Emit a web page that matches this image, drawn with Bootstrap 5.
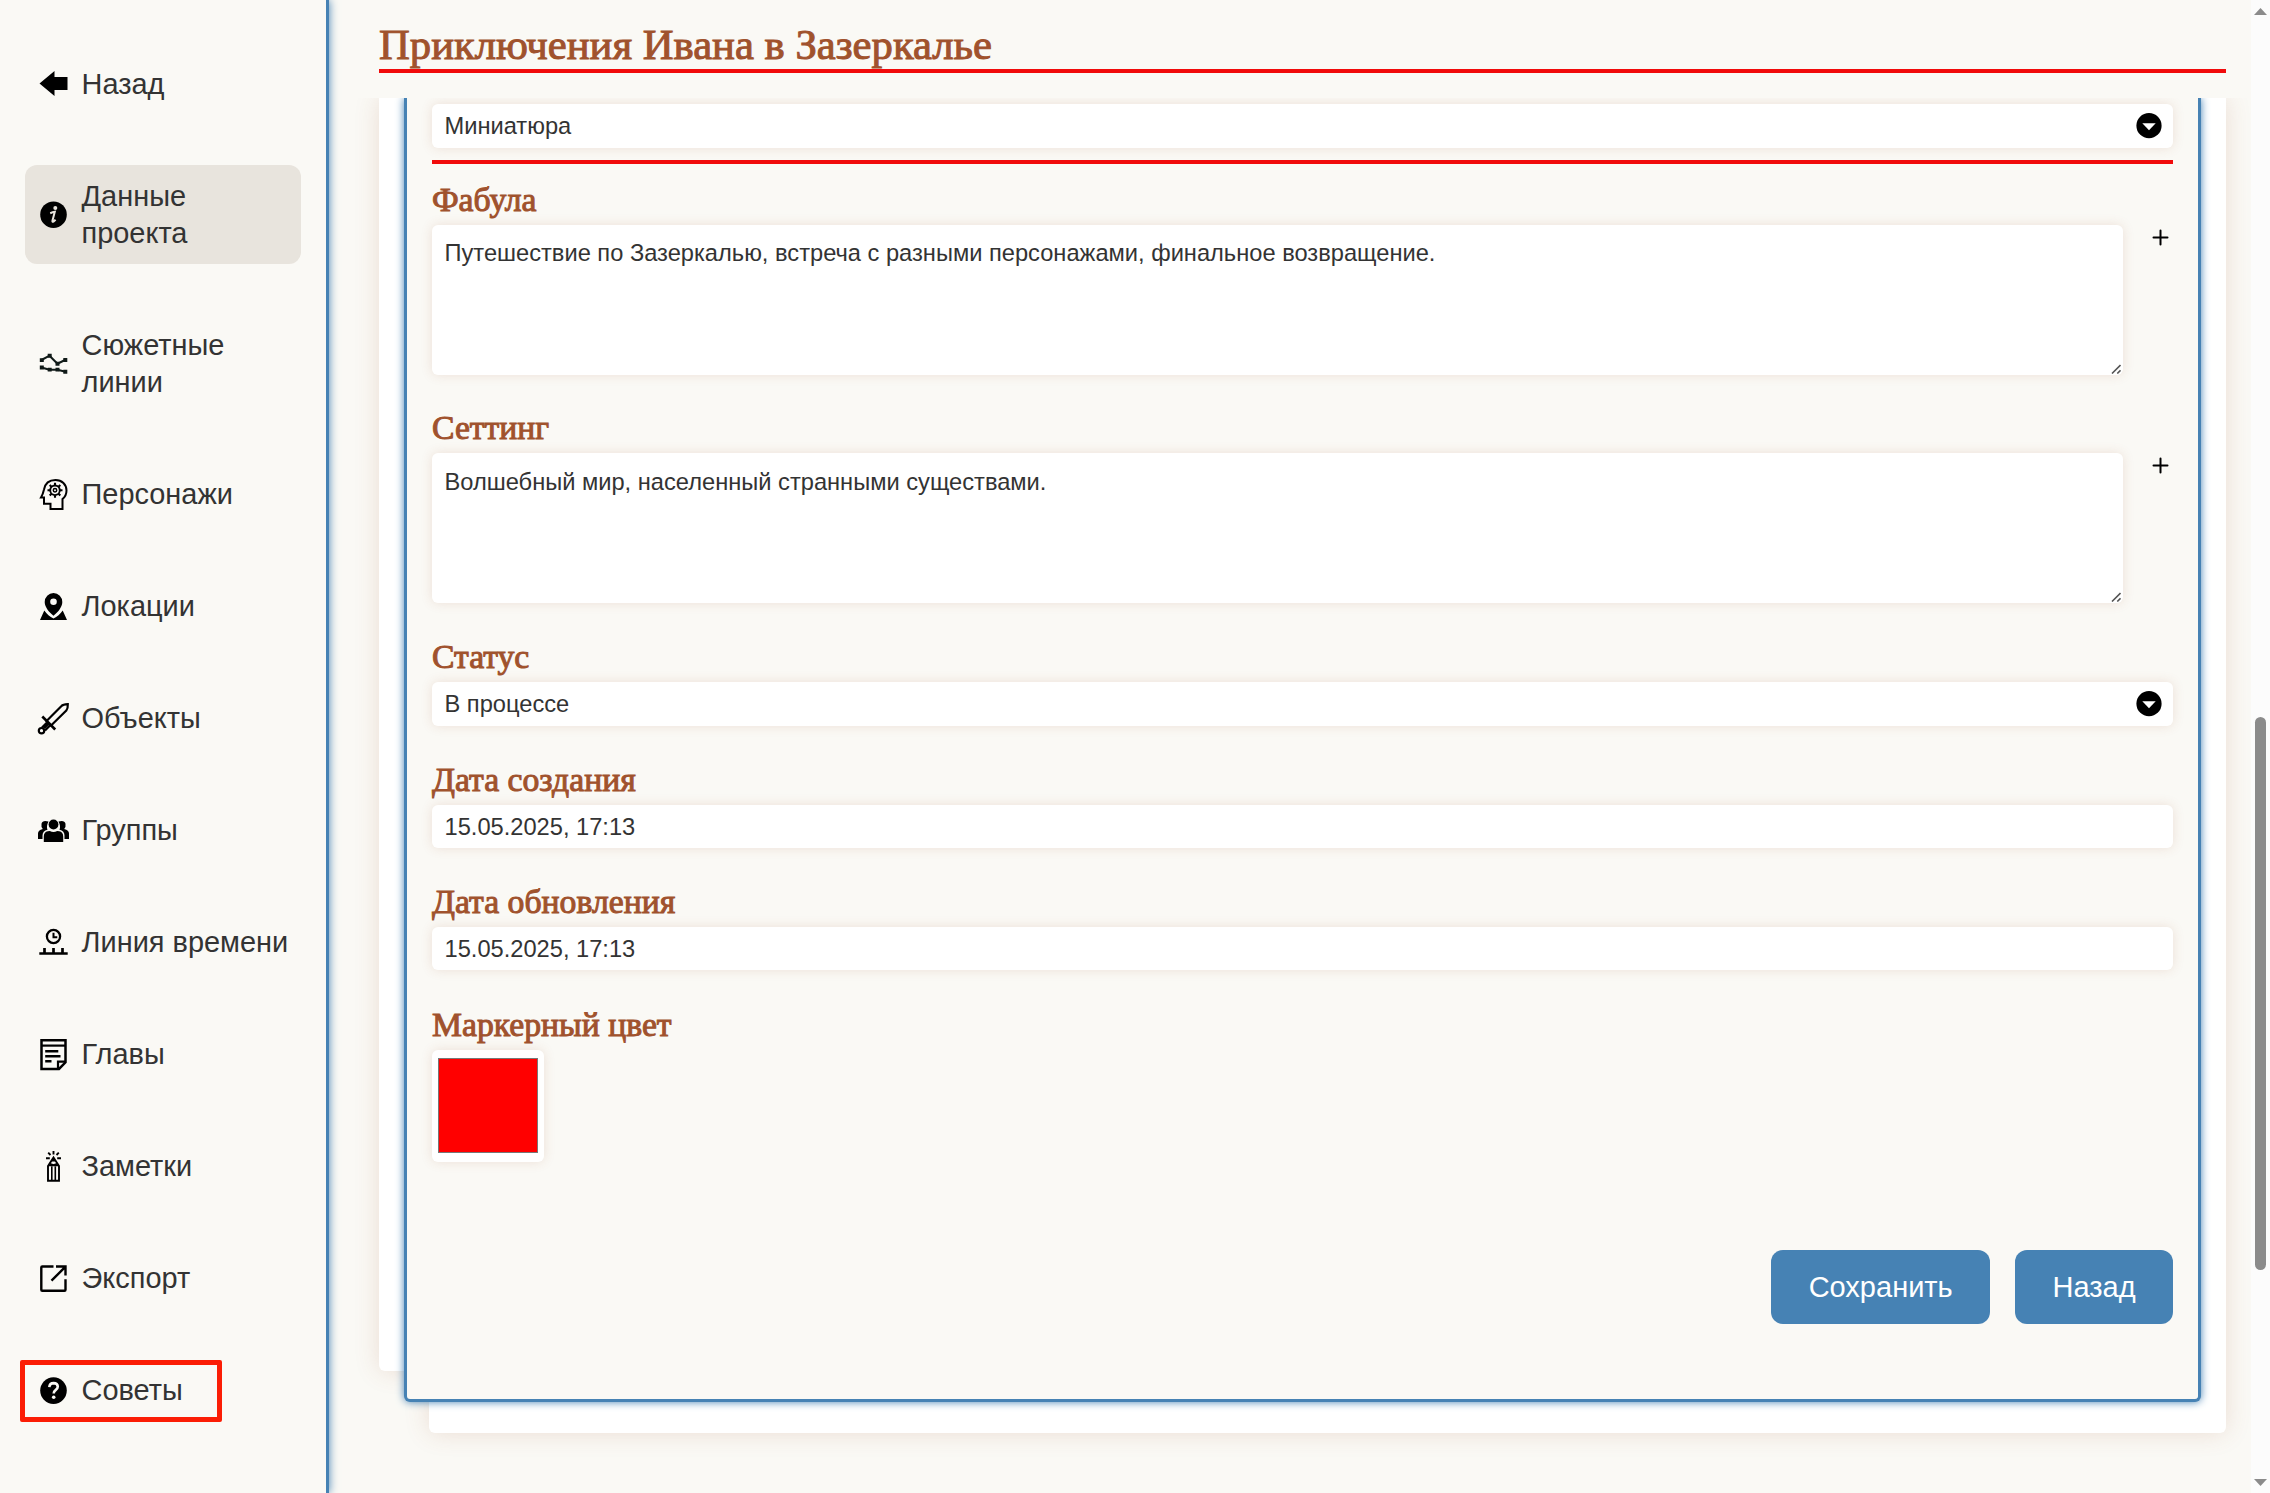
<!DOCTYPE html>
<html lang="ru">
<head>
<meta charset="utf-8">
<title>Приключения Ивана в Зазеркалье</title>
<meta name="viewport" content="width=device-width, initial-scale=1">
<link rel="stylesheet" href="https://cdn.jsdelivr.net/npm/bootstrap@5.3.0/dist/css/bootstrap.min.css">
<style>
  :root { --paper: #faf9f5; --steel: #4682b4; --sienna: #a0522d; --ink: #333; }
  body { background: var(--paper); color: var(--ink); font-family: "Liberation Sans", Arial, sans-serif; height: 1493px; overflow: hidden; }
  .side { width: 329px; border-right: 3px solid var(--steel); box-shadow: 0 0 9px var(--steel); padding: 53px 25px 0; gap: 50px; background: var(--paper); z-index: 2; }
  .side .nav-link { color: var(--ink); font-size: 28.95px; line-height: 37.33px; padding: 12.66px 0 12px 12px; gap: 12.5px; border-radius: 12px; }
  .side .nav-link.active { background: #e8e4dd; }
  .side .nav-link span { white-space: nowrap; }
  .side svg { width: 32px; height: 32px; flex: none; overflow: visible; }
  .side svg > * { transform: translateX(.5px); }
  .callout { left: 20px; top: 1360px; width: 202px; height: 62px; border: 5px solid #fb1d05; border-radius: 2px; z-index: 5; }
  .serif { font-family: "Liberation Serif", "Times New Roman", serif; color: var(--sienna); font-weight: 400; -webkit-text-stroke: 1px var(--sienna); }
  .page-head { height: 98px; padding: 20px 25px 0 50px; }
  .page-head h1 { font-size: 42.7px; line-height: 49px; height: 53px; margin: 0; border-bottom: 4px solid #f10b0b; white-space: nowrap; }
  .viewport { overflow: hidden; }
  .stack { display: grid; margin: 0 25px 0 50px; }
  .stack > * { grid-area: 1 / 1; }
  .sheet { background: #fff; border-radius: 0 0 6px 6px; box-shadow: 0 0 25px rgba(160,82,45,.17); }
  .sheet-left { margin: 0 50px 62px 0; }
  .sheet-right { margin: 0 0 0 50px; }
  .panel { margin: 0 25px 31px; border: 3px solid var(--steel); border-top: 0; border-radius: 0 0 6px 6px; background: var(--paper); box-shadow: 0 0 9px var(--steel); padding: 6px 25px 75px; z-index: 1; }
  .lbl { display: block; font-size: 33.7px; line-height: 40px; margin: 34px 0 5px; }
  .lbl-first { margin-top: 16px; }
  .lbl-second { margin-top: 33px; }
  .lbl-color { margin-top: 35px; }
  .field { display: flex; align-items: center; width: 100%; border: 0; border-radius: 6px; background: #fff; color: var(--ink); font-size: 23.66px; padding: 2px 12px 0 12.5px; height: 43px; box-shadow: 0 0 12px rgba(160,82,45,.15); }
  .field.pick { height: 44px; }
  .field.pick svg { width: 26px; height: 26px; margin: -2px -.5px 0 0; }
  textarea.field { display: block; height: 150px; resize: none; padding: 14px 12px 14px 12.5px; line-height: 28px; overflow: hidden; outline: 0; }
  textarea.field.setting { padding-top: 15px; }
  .area-row { gap: 24px; }
  .grip { right: 2px; bottom: 1px; width: 10px; height: 10px; }
  .rule { height: 4px; background: #f10b0b; margin: 12px 0 0; }
  .plus { width: 26px; height: 26px; }
  .swatch { width: 112px; height: 112px; padding: 8px 6px 9px; }
  .swatch i { flex: 1; align-self: stretch; background: #f00; border: 1px solid #777; }
  .acts { margin-top: 88px; gap: 25px; }
  .acts .btn { background: var(--steel); border: 0; color: #fff; height: 74px; border-radius: 12px; font-size: 29px; padding: 1px 37.4px 0; }
  .sbar { width: 19px; background: #fcfcfc; padding: 8px 0 7px; }
  .sbar .thumb { width: 11px; height: 553px; border-radius: 6px; background: #8b8b8b; margin-top: 702px; }
  .sbar svg { width: 13px; height: 7px; fill: #8b8b8b; }
</style>
</head>
<body class="d-flex position-relative">
<nav class="side nav flex-column flex-nowrap flex-shrink-0">
  <a class="nav-link d-flex align-items-center" href="#"><svg viewBox="0 0 32 32"><path d="M2 15.500 17 3V9H30V22H17V28z"/></svg><span>Назад</span></a>
  <a class="nav-link active d-flex align-items-center" href="#"><svg viewBox="0 0 32 32"><circle cx="16" cy="15.700" r="13.300"/><circle cx="17.800" cy="8.900" r="2" fill="#e9e5de"/><path d="M12.700 14.200q2.500-1 4.600-1.400l-2.300 8.600q-.4 1.900.9 1.200l2.200-1.900" fill="none" stroke="#e9e5de" stroke-width="2"/></svg><span>Данные<br>проекта</span></a>
  <a class="nav-link d-flex align-items-center" href="#"><svg viewBox="0 0 32 32"><g fill="none" stroke="#101a18" stroke-width="2.100"><path d="M4 12 12 7.700 20 15.700 28 11.800M4 19.500 12 21.700 20 21.700 28 23.800"/></g><g fill="#101a18"><path d="M2.300 10.200h4v3.800h-4zM10.200 5.800h4v3.900h-4zM18 13.800h4v3.900h-4zM25.800 10h4v4h-4zM2.300 17.600h4v3.800h-4zM10.200 19.800h4v3.800h-4zM18 19.800h4v3.800h-4zM25.800 21.800h4v3.900h-4z"/></g></svg><span>Сюжетные<br>линии</span></a>
  <a class="nav-link d-flex align-items-center" href="#"><svg viewBox="0 0 32 32"><g fill="none" stroke="#000" stroke-width="2"><path d="M25 29.900H13v-5.200H6.500v-6.200H3.500c1.500-2.500 2.200-4.500 3-8C7.600 4.500 11.500 1 18 1c6.500 0 11 4.500 11 10.500 0 3.500-1.500 6.500-4 8.500z"/><circle cx="17.500" cy="11.300" r="4.800" stroke-width="1.900"/><circle cx="17.500" cy="11.300" r="1.700" stroke-width="1.500"/><path stroke-width="2.100" d="M17.500 3.800v2.600M17.500 16.200V18.800M10 11.300h2.600M22.400 11.300H25M12.200 6 14 7.800M21 14.800l1.800 1.800M12.200 16.600 14 14.800M21 7.800l1.800-1.800"/></g></svg><span>Персонажи</span></a>
  <a class="nav-link d-flex align-items-center" href="#"><svg viewBox="0 0 32 32"><path fill-rule="evenodd" d="M16 2a8.800 8.800 0 0 1 8.800 9c0 5-4.300 10.200-8.800 13.700-4.500-3.500-8.800-8.700-8.800-13.700a8.800 8.800 0 0 1 8.800-9zM16 7.500a3.300 3.300 0 1 0 0 6.600 3.300 3.300 0 0 0 0-6.600z"/><path d="M6.800 19.500c2.500 3.700 5.500 6 9.200 8 3.700-2 6.700-4.300 9.200-8L29.500 29H2.500z"/></svg><span>Локации</span></a>
  <a class="nav-link d-flex align-items-center" href="#"><svg viewBox="0 0 32 32"><g fill="none" stroke="#000" stroke-width="2.200"><path d="M8.300 18.800 24 3Q25.500 1.300 30.300 1.100 30.500 5.500 28.800 7.600L12.800 23.200"/><path d="M4.800 13.500 17.700 26.500" stroke-width="2.600"/><path d="M6.500 25.300 12 19.800M4.500 24.500 9.500 19.500M7.500 27.500 13 22"/><circle cx="4" cy="27.700" r="2.700"/></g></svg><span>Объекты</span></a>
  <a class="nav-link d-flex align-items-center" href="#"><svg viewBox="0 0 32 32"><circle cx="16" cy="9.500" r="4.900"/><path d="M6.300 27V21.500q0-4.500 4-5.200l2-.3q3.700 2 7.400 0l2 .3q4 .7 4 5.200V27z"/><path d="M11 6.500q-6-1.800-7 2.300-.6 3 1.300 5.200Q.5 15 .5 18.500V24H5v-3.500q0-4.500 5-5.800Q8.500 11.500 11 6.500zM21 6.500q6-1.800 7 2.300.6 3-1.300 5.200 4.800 1 4.800 4.500V24H27v-3.500q0-4.500-5-5.800 1.500-3.200-1-8.200z"/></svg><span>Группы</span></a>
  <a class="nav-link d-flex align-items-center" href="#"><svg viewBox="0 0 32 32"><g fill="none" stroke="#000" stroke-width="2.300"><circle cx="16" cy="9.500" r="6.600"/><path d="M16 5.700v4.600h3.800" stroke-width="2"/><path d="M1.800 26.500H30.200M7 26v-5M16 26v-5M25 26v-5" stroke-width="2.700"/></g></svg><span>Линия времени</span></a>
  <a class="nav-link d-flex align-items-center" href="#"><svg viewBox="0 0 32 32"><g fill="none" stroke="#000" stroke-width="2.500"><path d="M4 1.300H28V23.300L21.500 29.900H4z"/><path d="M4 6.600H28" stroke-width="2.200"/><path d="M7.700 12.300H20.800M7.700 17.300H23M7.700 22.300H14"/><path d="M20.500 29.500V22.600H28" stroke-width="2.200"/></g></svg><span>Главы</span></a>
  <a class="nav-link d-flex align-items-center" href="#"><svg viewBox="0 0 32 32"><g fill="none" stroke="#000" stroke-width="1.900"><path d="M16 0v3.500M8.500 7.200h3.800M19.700 7.200h3.800M10.700 1.700 13 4M21.300 1.700 19 4"/><path d="M10.500 29.700V15L16 6.500 21.500 15V29.700z"/><path d="M14.300 29.700V15.500M17.800 29.700V15.500M10.500 14.500H21.500M12.500 12.800 16 14 19.500 12.800" stroke-width="1.600"/></g><path d="M16 6 18.300 10.500h-4.600z"/></svg><span>Заметки</span></a>
  <a class="nav-link d-flex align-items-center" href="#"><svg viewBox="0 0 32 32"><g fill="none" stroke="#000" stroke-width="2.400"><path d="M16 3.500H4.800Q3.800 3.500 3.800 4.500V26.700Q3.800 27.700 4.800 27.700H27Q28 27.700 28 26.700V16.200"/><path d="M18.500 3.500H28V12.400M27.500 4.200 14 17.600"/></g></svg><span>Экспорт</span></a>
  <a class="nav-link d-flex align-items-center" href="#"><svg viewBox="0 0 32 32"><circle cx="16" cy="15.600" r="13.300"/><path d="M11.800 12.200q.3-4.100 4.300-4.100 4 .1 4.200 3.500 0 2-2.200 3.500-1.900 1.300-1.900 3.300" fill="none" stroke="#fbf9f5" stroke-width="2.600"/><circle cx="16.200" cy="22.300" r="1.800" fill="#fbf9f5"/></svg><span>Советы</span></a>
</nav>
<div class="callout position-absolute"></div>
<main class="d-flex flex-column flex-grow-1">
  <header class="page-head flex-shrink-0"><h1 class="serif">Приключения Ивана в Зазеркалье</h1></header>
  <div class="viewport flex-grow-1">
    <div class="stack">
      <div class="sheet sheet-left"></div>
      <div class="sheet sheet-right"></div>
      <form class="panel">
        <div class="field pick justify-content-between"><span>Миниатюра</span><svg viewBox="0 0 26 26"><circle cx="13" cy="12.700" r="12.600"/><path d="M6.300 10.200h13.400L13 17.200z" fill="#fff"/></svg></div>
        <div class="rule"></div>
        <label class="lbl lbl-first serif">Фабула</label>
        <div class="area-row d-flex">
          <div class="position-relative flex-grow-1"><textarea class="field">Путешествие по Зазеркалью, встреча с разными персонажами, финальное возвращение.</textarea><svg class="grip position-absolute" viewBox="0 0 10 10"><path d="M1 9.500 9.500 1M6.300 9.500 9.500 6.300" stroke="#555" stroke-width="1.600"/></svg></div>
          <svg class="plus" viewBox="0 0 26 26"><path d="M13.500 5.500v14M6.500 12.500h14" stroke="#000" stroke-width="2" stroke-linecap="round"/></svg>
        </div>
        <label class="lbl lbl-second serif">Сеттинг</label>
        <div class="area-row d-flex">
          <div class="position-relative flex-grow-1"><textarea class="field setting">Волшебный мир, населенный странными существами.</textarea><svg class="grip position-absolute" viewBox="0 0 10 10"><path d="M1 9.500 9.500 1M6.300 9.500 9.500 6.300" stroke="#555" stroke-width="1.600"/></svg></div>
          <svg class="plus" viewBox="0 0 26 26"><path d="M13.500 5.500v14M6.500 12.500h14" stroke="#000" stroke-width="2" stroke-linecap="round"/></svg>
        </div>
        <label class="lbl serif">Статус</label>
        <div class="field pick justify-content-between"><span>В процессе</span><svg viewBox="0 0 26 26"><circle cx="13" cy="12.700" r="12.600"/><path d="M6.300 10.200h13.400L13 17.200z" fill="#fff"/></svg></div>
        <label class="lbl serif">Дата создания</label>
        <div class="field">15.05.2025, 17:13</div>
        <label class="lbl serif">Дата обновления</label>
        <div class="field">15.05.2025, 17:13</div>
        <label class="lbl lbl-color serif">Маркерный цвет</label>
        <div class="field swatch"><i></i></div>
        <div class="acts d-flex justify-content-end">
          <button type="button" class="btn">Сохранить</button>
          <button type="button" class="btn">Назад</button>
        </div>
      </form>
    </div>
  </div>
</main>
<div class="sbar d-flex flex-column align-items-center flex-shrink-0">
  <svg viewBox="0 0 13 7"><path d="M0 7 6.500 0 13 7z"/></svg>
  <div class="thumb"></div>
  <svg class="mt-auto" viewBox="0 0 13 7"><path d="M0 0H13L6.500 7z"/></svg>
</div>
<script src="https://cdn.jsdelivr.net/npm/bootstrap@5.3.0/dist/js/bootstrap.bundle.min.js"></script>
</body>
</html>
